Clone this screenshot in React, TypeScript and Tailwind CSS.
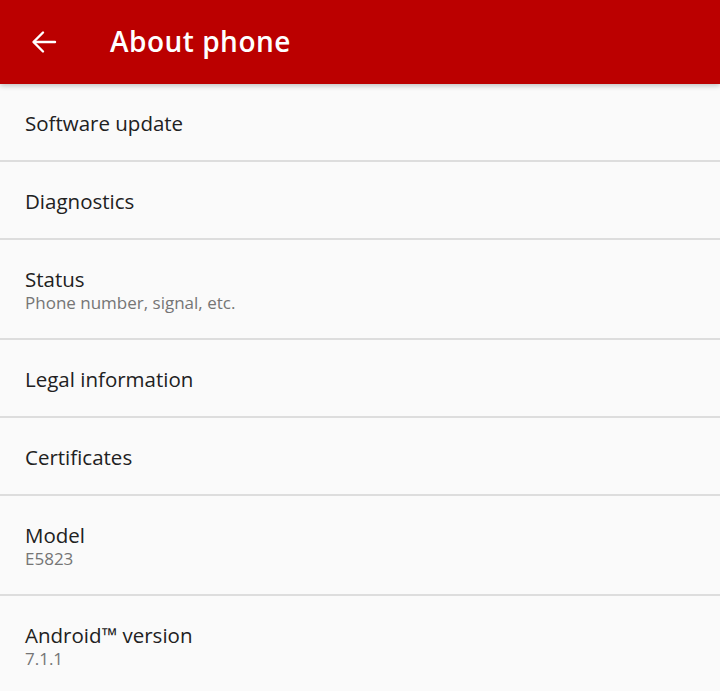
import React from 'react';

interface Item {
  title: string;
  summary?: string;
}

const items: Item[] = [
  { title: 'Software update' },
  { title: 'Diagnostics' },
  { title: 'Status', summary: 'Phone number, signal, etc.' },
  { title: 'Legal information' },
  { title: 'Certificates' },
  { title: 'Model', summary: 'E5823' },
  { title: 'Android™ version', summary: '7.1.1' },
];

function BackArrow() {
  return (
    <svg width="26" height="24" viewBox="0 0 26 24" fill="none" stroke="white" strokeWidth="2.4" strokeLinecap="round" strokeLinejoin="round">
      <path d="M24 12H3" />
      <path d="M12 2.5L2.5 12l9.5 9.5" />
    </svg>
  );
}

export default function App() {
  return (
    <div className="w-[720px] h-[691px] overflow-hidden bg-[#fafafa] font-['Open_Sans',sans-serif]">
      {/* Toolbar */}
      <div className="relative z-10 h-[84px] bg-[#bb0000] flex items-center shadow-[0_2px_5px_rgba(0,0,0,0.22)]">
        <div className="w-[110px] pl-[31px] flex items-center">
          <BackArrow />
        </div>
        <h1 className="text-white text-[28px] font-semibold tracking-[0.5px] leading-none -mt-[2px]">About phone</h1>
      </div>

      {/* Preference list */}
      <div className="flex flex-col">
        {items.map((item) => (
          <div
            key={item.title}
            className={`flex flex-col justify-center pl-[25px] border-b-2 border-[#dddddd] ${item.summary ? 'h-[100px] pt-[3px]' : 'h-[78px] pt-[1px]'}`}
          >
            <div className="text-[20.5px] leading-[24px] text-[#212121]">{item.title}</div>
            {item.summary && (
              <div className="text-[17px] leading-[23px] text-[#757575]">{item.summary}</div>
            )}
          </div>
        ))}
      </div>
    </div>
  );
}
